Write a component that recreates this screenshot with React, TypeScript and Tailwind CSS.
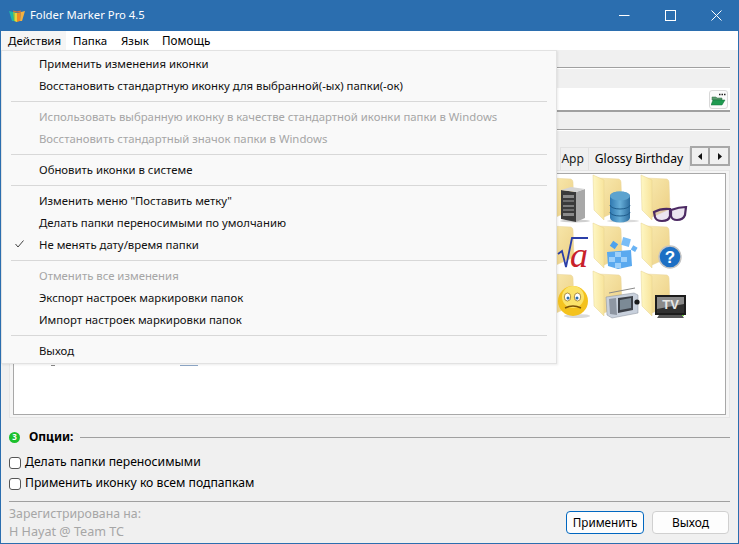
const font = { fontFamily: '"Noto Sans", sans-serif' };

type Item = { label?: string; disabled?: boolean; checked?: boolean; sep?: boolean };

const items: Item[] = [
  { label: "Применить изменения иконки" },
  { label: "Восстановить стандартную иконку для выбранной(-ых) папки(-ок)" },
  { sep: true },
  { label: "Использовать выбранную иконку в качестве стандартной иконки папки в Windows", disabled: true },
  { label: "Восстановить стандартный значок папки в Windows", disabled: true },
  { sep: true },
  { label: "Обновить иконки в системе" },
  { sep: true },
  { label: 'Изменить меню "Поставить метку"' },
  { label: "Делать папки переносимыми по умолчанию" },
  { label: "Не менять дату/время папки", checked: true },
  { sep: true },
  { label: "Отменить все изменения", disabled: true },
  { label: "Экспорт настроек маркировки папок" },
  { label: "Импорт настроек маркировки папок" },
  { sep: true },
  { label: "Выход" },
];

function Folder({ children }: { children?: React.ReactNode }) {
  return (
    <svg width="48" height="48" viewBox="0 0 48 48" className="block overflow-visible">
      <defs>
        <linearGradient id="fb" x1="0" y1="0" x2="1" y2="1">
          <stop offset="0" stopColor="#f9eab0" />
          <stop offset="1" stopColor="#eccf84" />
        </linearGradient>
        <linearGradient id="ff" x1="0" y1="0" x2="1" y2="0">
          <stop offset="0" stopColor="#fef7c4" />
          <stop offset="1" stopColor="#f8e49c" />
        </linearGradient>
      </defs>
      <path d="M5 3 L26 4 Q28 5 28 7 L29 34 L11 42 Z" fill="url(#fb)" stroke="#e8d59c" strokeWidth="0.5" />
      <path d="M0 0 L11 5 L11 45 L1 35 Z" fill="url(#ff)" stroke="#e6d28f" strokeWidth="0.5" />
      {children}
    </svg>
  );
}

function Server() {
  return (
    <g>
      <ellipse cx="30" cy="46" rx="15" ry="1.5" fill="#00000030" />
      <path d="M31 17 L40 14 L40 43 L31 47 Z" fill="#a8a8a8" />
      <path d="M16 15 L31 17 L31 47 L16 44 Z" fill="#3a3a3a" />
      <path d="M16 15 L26 12 L40 14 L31 17 Z" fill="#d4d4d4" />
      <rect x="18" y="20" width="11" height="3" fill="#8a8a8a" />
      <rect x="18" y="25" width="11" height="2" fill="#6c6c6c" />
      <rect x="18" y="30" width="11" height="2" fill="#7c7c7c" />
      <rect x="18" y="34" width="11" height="2" fill="#6c6c6c" />
      <rect x="18" y="38" width="11" height="3" fill="#8a8a8a" />
    </g>
  );
}

function Database() {
  return (
    <g>
      <ellipse cx="30" cy="46" rx="16" ry="1.5" fill="#00000025" />
      <defs>
        <linearGradient id="db" x1="0" y1="0" x2="1" y2="0">
          <stop offset="0" stopColor="#2f78b0" />
          <stop offset="0.5" stopColor="#67aed8" />
          <stop offset="1" stopColor="#2c6c9e" />
        </linearGradient>
      </defs>
      <path d="M17 21 A10 4.5 0 0 1 37 21 L37 43 A10 4.5 0 0 1 17 43 Z" fill="url(#db)" />
      <ellipse cx="27" cy="21" rx="10" ry="4.5" fill="#5da3cf" />
      <path d="M17 30 A10 4 0 0 0 37 30 M17 37 A10 4 0 0 0 37 37" fill="none" stroke="#1f5d8c" strokeWidth="1" />
    </g>
  );
}

function Glasses() {
  return (
    <g fill="#c8b8d8" stroke="#4c2a63" strokeWidth="2.2">
      <path d="M13 37 Q20 33 29 34 L29 41 Q28 46 21 46 Q15 46 14 42 Z" fillOpacity="0.35" />
      <path d="M30 35 Q38 32 45 32 L44 40 Q42 45 36 45 Q31 45 30 41 Z" fillOpacity="0.35" />
    </g>
  );
}

function Formula() {
  return (
    <g>
      <path d="M13 31 L17 28 L21 44 L27 15 L43 15" fill="none" stroke="#2b3fa8" strokeWidth="1.8" />
      <text x="25" y="44" fontFamily='"Liberation Serif", serif' fontStyle="italic" fontSize="36" fill="#c8202a">a</text>
    </g>
  );
}

function Cubes() {
  return (
    <g>
      <path d="M14 29 L38 27 L39 43 L25 46 L15 43 Z" fill="#5aa9ef" />
      <path d="M22 29 h6 v5 h-6 Z M28 34 h6 v5 h-6 Z M16 34 h6 v5 h-6 Z M22 40 h6 v5 h-6 Z" fill="#9ed0fa" />
      <rect x="18" y="19" width="6" height="6" transform="rotate(35 21 22)" fill="#4ea2ee" />
      <rect x="29" y="15" width="8" height="8" transform="rotate(15 33 19)" fill="#79bdf7" />
      <rect x="39" y="23" width="5" height="5" transform="rotate(30 41 25)" fill="#6ab3f4" />
    </g>
  );
}

function Question() {
  return (
    <g>
      <circle cx="29" cy="34" r="11" fill="#1d6fc4" stroke="#c4c4c4" strokeWidth="1.5" />
      <text x="29" y="40" textAnchor="middle" fontFamily='"Liberation Sans", sans-serif' fontWeight="700" fontSize="17" fill="#ffffff">?</text>
    </g>
  );
}

function Smiley() {
  return (
    <g>
      <ellipse cx="32" cy="45" rx="13" ry="2" fill="#00000025" />
      <circle cx="28" cy="30" r="15" fill="#f4c21e" />
      <circle cx="28" cy="26" r="11" fill="#fbe36a" />
      <ellipse cx="22.5" cy="26" rx="3.2" ry="4" fill="#ffffff" stroke="#8a6410" strokeWidth="0.7" />
      <ellipse cx="32.5" cy="26" rx="3.2" ry="4" fill="#ffffff" stroke="#8a6410" strokeWidth="0.7" />
      <circle cx="23" cy="27" r="1.5" fill="#2c6da8" />
      <circle cx="32" cy="27" r="1.5" fill="#2c6da8" />
      <path d="M20 37 Q28 33 36 37" fill="none" stroke="#7a5208" strokeWidth="1.4" />
    </g>
  );
}

function Radio() {
  return (
    <g>
      <path d="M16 22 L42 17" stroke="#8a8a8a" strokeWidth="1" />
      <path d="M13 26 L41 22 L45 24 L45 42 L19 47 L14 44 Z" fill="#c8d0dc" stroke="#848c98" strokeWidth="0.5" />
      <path d="M16 28 L23 27 L24 44 L17 43 Z" fill="#8e96a2" />
      <path d="M25 27 L40 25 L40 39 L25 42 Z" fill="#3c4048" />
      <path d="M27 29 L38 27 L38 37 L27 39 Z" fill="#7c8a96" />
      <circle cx="44" cy="31" r="2.6" fill="#1a1a1a" />
    </g>
  );
}

function Tv() {
  return (
    <g>
      <path d="M14 24 H45 V44 H14 Z" fill="#1c1c1c" />
      <path d="M16 26 H43 V42 H16 Z" fill="#303030" />
      <path d="M16 26 H43 V33 L16 38 Z" fill="#8a8a8a" />
      <text x="29.5" y="38" textAnchor="middle" fontFamily='"Liberation Sans", sans-serif' fontWeight="700" fontSize="13" fill="#e6e6e6">TV</text>
      <path d="M18 44 H41 L43 47 H16 Z" fill="#555" />
      <rect x="41" y="44" width="2" height="1" fill="#70d040" />
    </g>
  );
}

const overlays = [
  <Server />, <Database />, <Glasses />,
  <Formula />, <Cubes />, <Question />,
  <Smiley />, <Radio />, <Tv />,
];

function SectionLine() {
  return <div className="h-[2px] flex-1 border-t border-[#a0a0a0] bg-white" />;
}

export default function App() {
  return (
    <div style={font} className="relative flex h-[544px] w-[739px] flex-col overflow-hidden border-x border-b border-[#2b6eaf] bg-[#f0f0f0] text-[11.5px] text-black">
      {/* title bar */}
      <div className="-mx-px flex h-[31px] shrink-0 items-center bg-[#2b6eaf] pl-[9px] text-white">
        <svg width="16" height="14" viewBox="0 0 16 14">
          <path d="M0 2 L4 3 L5 12 L3 12 Z" fill="#1fb5a8" />
          <path d="M4 3 L8 4 L8 13 L5 12 Z" fill="#9fc83c" />
          <path d="M6 4 L8 4 L8 13 L6 12 Z" fill="#e6d23c" />
          <path d="M8 4 L12 3 L11 12 L8 13 Z" fill="#f08a24" />
          <path d="M12 3 L16 2 L13 12 L11 12 Z" fill="#f4b040" />
          <path d="M4 2 L8 3 L12 2" fill="none" stroke="#f07028" />
        </svg>
        <span className="ml-[5px] text-[11.3px]">Folder Marker Pro 4.5</span>
        <div className="ml-auto flex h-full">
          <div className="flex w-[46px] items-center justify-center">
            <svg width="11" height="11" viewBox="0 0 11 11"><path d="M0 5.5 H10.5" stroke="#fff" /></svg>
          </div>
          <div className="flex w-[46px] items-center justify-center">
            <svg width="11" height="11" viewBox="0 0 11 11"><rect x="0.5" y="0.5" width="10" height="10" fill="none" stroke="#fff" /></svg>
          </div>
          <div className="flex w-[46px] items-center justify-center">
            <svg width="11" height="11" viewBox="0 0 11 11"><path d="M0.5 0.5 L10.5 10.5 M10.5 0.5 L0.5 10.5" stroke="#fff" /></svg>
          </div>
        </div>
      </div>

      {/* menu bar */}
      <div className="flex h-[19px] shrink-0 items-center bg-white">
        <span className="flex h-full w-[65px] items-center bg-[#f5f5f5] pl-[7px]">Действия</span>
        <span className="ml-[7px] w-[34px]">Папка</span>
        <span className="ml-[14px] w-[28px]">Язык</span>
        <span className="ml-[13px] text-[11.7px]">Помощь</span>
      </div>

      {/* main */}
      <div className="flex flex-1 flex-col pl-[8px] pr-[8px]">
        <div className="mb-[3px] flex h-[35px] shrink-0 items-center">
          <SectionLine />
        </div>
        <div className="flex h-[24px] shrink-0 items-center justify-end border-b-2 border-[#a0a0a0] bg-white pr-[2px]">
          <div className="flex h-[19px] w-[19px] items-center justify-center rounded-[3px] border border-[#d8d8d8] bg-[#fbfbfb]">
            <svg width="15" height="13" viewBox="0 0 15 13">
              <path d="M8 1.5 h1.5 M10.5 1.5 h1.5 M13 1.5 h1.5" stroke="#222" strokeWidth="1.4" />
              <path d="M1 4 h4 l1 1 h5 v2 H1 Z" fill="#5c9c70" stroke="#2c6c40" strokeWidth="0.5" />
              <path d="M0 12 L2 7 H14 L11 12 Z" fill="#1f9a50" stroke="#107038" strokeWidth="0.5" />
            </svg>
          </div>
        </div>
        <div className="flex h-[35px] shrink-0 items-center">
          <SectionLine />
        </div>

        {/* tabs */}
        <div className="flex h-[23px] shrink-0 items-stretch justify-end text-[12.1px]">
          <div className="flex items-center border-x border-t border-[#e2e2e2] pr-[4px] text-[#1a1a1a]">App</div>
          <div className="flex w-[101px] items-center justify-center border-r border-t border-[#e2e2e2]">Glossy Birthday</div>
          <div className="-mt-px flex h-[20px] border-2 border-[#a8a8a8] bg-[#f0f0f0]">
            <div className="flex w-[18px] items-center justify-center border-r-2 border-[#a8a8a8]">
              <svg width="5" height="7" viewBox="0 0 5 7"><path d="M4 0 V7 L0 3.5 Z" fill="#111" /></svg>
            </div>
            <div className="flex w-[18px] items-center justify-center">
              <svg width="5" height="7" viewBox="0 0 5 7"><path d="M1 0 V7 L5 3.5 Z" fill="#111" /></svg>
            </div>
          </div>
        </div>
        <div className="h-[248px] shrink-0 border border-[#e6e6e6] bg-[#f5f5f5] px-[3px] py-[2px]">
          <div className="relative h-full border border-[#a8a8a8] bg-white">
            <div className="grid grid-cols-[repeat(3,48px)] pl-[531px] pt-[1px]">
              {overlays.map((o, i) => (
                <Folder key={i}>{o}</Folder>
              ))}
            </div>
            <span className="absolute left-[37px] top-[191px] h-[1px] w-[4px] bg-[#888]" />
            <span className="absolute left-[166px] top-[191px] h-[1px] w-[18px] bg-[#8fa8c8]" />
          </div>
        </div>

        {/* options */}
        <div className="flex h-[33px] shrink-0 items-center pt-[5px] text-[12px]">
          <div className="flex h-[11px] w-[11px] items-center justify-center rounded-full bg-[#1cc02c] text-[8px] font-bold leading-none text-white">3</div>
          <span className="ml-[9px] font-bold">Опции:</span>
          <div className="ml-[7px] flex-1 border-t border-[#a0a0a0]" />
        </div>
        <label className="flex h-[21px] shrink-0 items-center pt-[2px]">
          <span className="h-[12px] w-[12px] rounded-[3px] border border-[#555] bg-white" />
          <span className="ml-[4px] text-[12.2px]">Делать папки переносимыми</span>
        </label>
        <label className="flex h-[21px] shrink-0 items-center pt-[2px]">
          <span className="h-[12px] w-[12px] rounded-[3px] border border-[#555] bg-white" />
          <span className="ml-[4px] text-[12.2px]">Применить иконку ко всем подпапкам</span>
        </label>
        <div className="mt-[8px] shrink-0 border-t border-[#a0a0a0]" />
        <div className="flex flex-1 items-start justify-between">
          <div className="pt-[3px] text-[12.3px] leading-[17.5px] text-[#a6a6a6]">
            <div>Зарегистрирована на:</div>
            <div className="text-[12.6px]">H Hayat @ Team TC</div>
          </div>
          <div className="flex gap-[8px] pr-[1px] pt-[9px]">
            <button className="h-[23px] w-[78px] rounded-[4px] border border-[#0067c0] bg-[#fdfdfd] text-[11.7px]">Применить</button>
            <button className="h-[23px] w-[77px] rounded-[4px] border border-[#d0d0d0] bg-[#fdfdfd] text-[12px]">Выход</button>
          </div>
        </div>
      </div>

      {/* open dropdown */}
      <div className="absolute left-0 top-[50px] h-[314px] w-[556px] border border-[#e2e2e2] bg-[#f9f9f9] pt-[1px] text-[11.35px] shadow-[1px_1px_2px_rgba(0,0,0,0.08)]">
        {items.map((item, i) =>
          item.sep ? (
            <div key={i} className="flex h-[8.7px] items-center px-[9px] pt-[1px]">
              <div className="w-full border-t border-[#d8d8d8]" />
            </div>
          ) : (
            <div key={i} className={`relative flex h-[22.2px] items-center pl-[37px] ${item.disabled ? "text-[#a6a6a6]" : "text-[#111]"}`}>
              {item.checked && (
                <svg className="absolute left-[13px] top-[7px]" width="9" height="8" viewBox="0 0 9 8">
                  <path d="M0.5 4 L3 7 L8.5 0.5" fill="none" stroke="#444" strokeWidth="1" />
                </svg>
              )}
              {item.label}
            </div>
          )
        )}
      </div>
    </div>
  );
}
